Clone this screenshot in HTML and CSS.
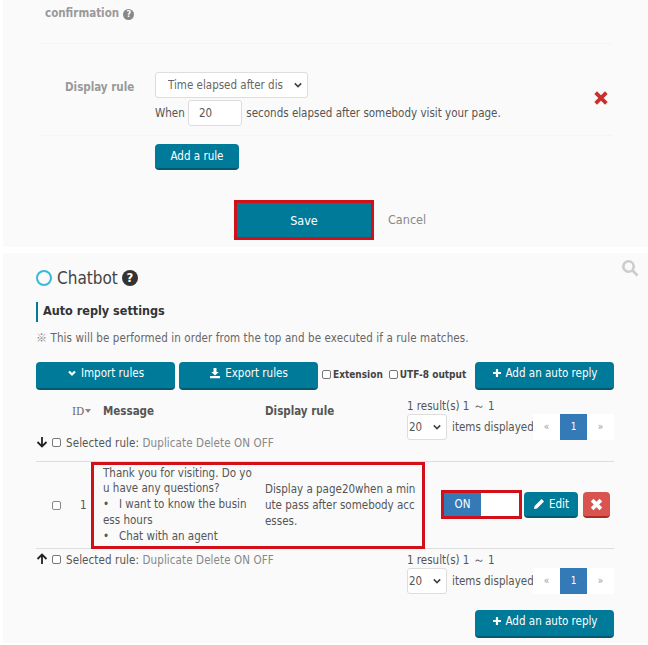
FILE: index.html
```html
<!DOCTYPE html>
<html lang="en">
<head>
    <meta charset="UTF-8">
    <title>Chatbot</title>
    <link rel="stylesheet" href="styles.css">
</head>
<body>
    <section class="panel top">
        <div class="confirm"><b>confirmation</b> <span class="help small">?</span></div>
        <div class="rule">
            <div class="rule-label">Display rule</div>
            <div class="rule-body">
                <div class="fake-select wide"><span class="clip">Time elapsed after dis</span><svg class="chev" viewBox="0 0 10 6"><path d="M1 1l4 4 4-4" /></svg></div>
                <div class="when">When <span class="fake-input">20</span> seconds elapsed after somebody visit your page.</div>
            </div>
            <svg class="rule-del" viewBox="0 0 12 12"><path d="M2 2l8 8M10 2l-8 8" /></svg>
        </div>
        <div class="add-rule"><button class="btn">Add a rule</button></div>
        <div class="save-row">
            <button class="btn save">Save</button>
            <span class="cancel">Cancel</span>
        </div>
    </section>

    <section class="panel bottom">
        <svg class="search" viewBox="0 0 18 18"><circle cx="7.5" cy="7.5" r="5.2" /><path d="M11.5 11.5l5 5" /></svg>
        <h1><span class="ring"></span>Chatbot <span class="help">?</span></h1>
        <h2>Auto reply settings</h2>
        <p class="note"><span class="mark">※</span> This will be performed in order from the top and be executed if a rule matches.</p>

        <div class="toolbar">
            <button class="btn big"><svg class="ico" viewBox="0 0 10 10"><path d="M2 3.5l3 3 3-3" class="thick" /></svg>Import rules</button>
            <button class="btn big"><svg class="ico wide-ico" viewBox="0 0 12 12"><path d="M4.5 1h3v4h2.2L6 8.6 2.3 5h2.2zM1 9h10v2.2H1z" class="solid" /></svg>Export rules</button>
            <label class="opt"><span class="check"></span>Extension</label>
            <label class="opt"><span class="check"></span>UTF-8 output</label>
            <button class="btn big add"><svg class="ico" viewBox="0 0 10 10"><path d="M5 1v8M1 5h8" class="thick" /></svg>Add an auto reply</button>
        </div>

        <div class="head">
            <div class="head-cols">
                <span class="id-col">ID<i class="sort"></i></span>
                <b class="msg-col">Message</b>
                <b class="disp-col">Display rule</b>
            </div>
            <div class="paging">
                <div>1 result(s) 1 ～ 1</div>
                <div class="paging-row">
                    <div class="fake-select small-sel">20<svg class="chev" viewBox="0 0 10 6"><path d="M1 1l4 4 4-4" /></svg></div>
                    <span class="items">items displayed</span>
                    <div class="pager"><span>«</span><span class="cur">1</span><span>»</span></div>
                </div>
            </div>
        </div>
        <div class="bulk head-bulk">
            <svg class="arrow" viewBox="0 0 12 12"><path d="M6 1v9M1.5 6L6 10.5 10.5 6" /></svg><span class="check"></span>Selected rule: <span class="muted">Duplicate Delete ON OFF</span>
        </div>

        <div class="row">
            <div class="row-check"><span class="check big-check"></span></div>
            <div class="row-id">1</div>
            <div class="marked">
                <div class="msg">
                    Thank you for visiting. Do yo<br>u have any questions?<br>
                    •&nbsp;&nbsp; I want to know the busin<br>ess hours<br>
                    •&nbsp;&nbsp; Chat with an agent
                </div>
                <div class="disp">Display a page20when a min<br>ute pass after somebody acc<br>esses.</div>
            </div>
            <div class="toggle"><span class="on">ON</span><span class="off"></span></div>
            <button class="btn edit"><svg class="ico wide-ico" viewBox="0 0 12 12"><path d="M8.6 1l2.4 2.4-7 7L1 11l.6-3z" class="solid" /></svg>Edit</button>
            <button class="btn del"><svg viewBox="0 0 12 12"><path d="M2.5 2.5l7 7M9.5 2.5l-7 7" /></svg></button>
        </div>

        <div class="foot">
            <div class="bulk">
                <svg class="arrow" viewBox="0 0 12 12"><path d="M6 11V2M1.5 6L6 1.5 10.5 6" /></svg><span class="check"></span>Selected rule: <span class="muted">Duplicate Delete ON OFF</span>
            </div>
            <div class="paging">
                <div>1 result(s) 1 ～ 1</div>
                <div class="paging-row">
                    <div class="fake-select small-sel">20<svg class="chev" viewBox="0 0 10 6"><path d="M1 1l4 4 4-4" /></svg></div>
                    <span class="items">items displayed</span>
                    <div class="pager"><span>«</span><span class="cur">1</span><span>»</span></div>
                </div>
            </div>
        </div>
        <div class="foot-add">
            <button class="btn big add"><svg class="ico" viewBox="0 0 10 10"><path d="M5 1v8M1 5h8" class="thick" /></svg>Add an auto reply</button>
        </div>
    </section>
</body>
</html>
```

FILE: styles.css
```css
*{
    margin: 0;
    padding: 0;
    box-sizing: border-box;
}
body{
    background-color: white;
    font-family: "DejaVu Sans Condensed", "DejaVu Sans", sans-serif;
    font-stretch: condensed;
    font-size: 11.5px;
    line-height: 16px;
    color: #555;
    width: 648px;
    height: 645px;
    overflow: hidden;
}
button{
    font-family: inherit;
    font-stretch: inherit;
}
.panel{
    background-color: #fafafa;
    margin-left: 3px;
}
.top{
    height: 247px;
    padding-top: 5px;
}
.bottom{
    position: relative;
    height: 390px;
    margin-top: 6px;
    padding-top: 16px;
}

/* buttons */
.btn{
    background-color: #007a99;
    border: none;
    border-bottom: 2px solid #035a70;
    border-radius: 4px;
    color: white;
    font-size: 11.5px;
    cursor: pointer;
}
.big{
    width: 139px;
    height: 28px;
    padding-bottom: 5px;
}
.ico{
    width: 10px;
    height: 10px;
    margin-right: 4px;
    vertical-align: -1px;
}
.wide-ico{
    width: 12px;
    height: 12px;
    vertical-align: -2px;
}
.thick{
    fill: none;
    stroke: white;
    stroke-width: 2.2;
}
.solid{
    fill: white;
}
.help{
    display: inline-flex;
    justify-content: center;
    align-items: center;
    width: 16px;
    height: 16px;
    border-radius: 50%;
    background-color: #333;
    color: white;
    font-size: 13px;
    font-weight: bold;
}
.help.small{
    width: 11px;
    height: 11px;
    font-size: 9px;
    background-color: #888;
    margin-left: 1px;
}

/* top form */
.confirm{
    color: #999;
    height: 39px;
    border-bottom: 1px solid #f5f5f5;
    margin-right: 35px;
    margin-left: 37px;
    padding-left: 5px;
}
.rule{
    display: flex;
    margin: 0 35px 0 37px;
    height: 92px;
    padding-top: 28px;
    border-bottom: 1px solid #f5f5f5;
}
.rule-label{
    width: 115px;
    padding: 7px 0 0 25px;
    color: #999;
    font-weight: bold;
    white-space: nowrap;
}
.rule-body{
    width: 439px;
}
.fake-select{
    display: flex;
    align-items: center;
    background-color: white;
    border: 1px solid #ddd;
    border-radius: 3px;
    white-space: nowrap;
    overflow: hidden;
}
.wide{
    width: 153px;
    height: 26px;
    padding-left: 12px;
    color: #666;
}
.clip{
    width: 115px;
    overflow: hidden;
}
.chev{
    width: 8px;
    height: 6px;
    margin-left: auto;
    margin-right: 5px;
    flex-shrink: 0;
    fill: none;
    stroke: #444;
    stroke-width: 2;
}
.when{
    margin-top: 2px;
    white-space: nowrap;
}
.fake-input{
    display: inline-block;
    width: 54px;
    height: 26px;
    line-height: 24px;
    padding-left: 10px;
    margin-right: 1px;
    background-color: white;
    border: 1px solid #ddd;
    border-radius: 3px;
}
.rule-del{
    width: 16px;
    height: 16px;
    margin-top: 18px;
    margin-left: -1px;
    fill: none;
    stroke: #c9302c;
    stroke-width: 2.8;
}
.add-rule{
    margin: 8px 0 0 152px;
}
.add-rule .btn{
    width: 84px;
    height: 26px;
}
.save-row{
    display: flex;
    align-items: center;
    margin: 30px 0 0 231px;
}
.save{
    width: 140px;
    height: 40px;
    font-size: 12.5px;
    border: 3px solid #d2101a;
    border-radius: 0;
}
.cancel{
    margin-left: 14px;
    font-size: 12.5px;
    color: #888;
}

/* bottom panel */
.search{
    position: absolute;
    top: 6px;
    right: 9px;
    width: 18px;
    height: 18px;
    fill: none;
    stroke: #ccc;
    stroke-width: 2.6;
}
h1{
    display: flex;
    align-items: center;
    margin-left: 33px;
    font-size: 17px;
    line-height: 18px;
    font-weight: normal;
    color: #444;
}
.ring{
    width: 16px;
    height: 16px;
    margin-right: 5px;
    border: 2px solid #3bb8d8;
    border-radius: 50%;
}
h1 .help{
    margin-left: 4px;
}
h2{
    margin: 15px 0 0 33px;
    padding-left: 5px;
    border-left: 2px solid #007a99;
    height: 20px;
    font-size: 12.5px;
    line-height: 18px;
    color: #333;
}
.note{
    margin: 7px 0 0 33px;
    color: #666;
    letter-spacing: 0.1px;
}
.mark{
    font-family: "Noto Sans CJK JP", sans-serif;
    font-size: 11px;
    color: #888;
}
.toolbar{
    display: flex;
    align-items: center;
    margin: 16px 34px 0 33px;
    gap: 4px;
}
.opt{
    display: inline-flex;
    align-items: center;
    font-size: 10px;
    font-weight: bold;
    white-space: nowrap;
    color: #444;
    margin-bottom: 3px;
    gap: 1px;
}
.opt + .opt{
    margin-left: 2px;
}
.check{
    display: inline-block;
    width: 9px;
    height: 9px;
    background-color: white;
    border: 1px solid #777;
    border-radius: 2px;
    margin-right: 1px;
}
.toolbar .add{
    margin-left: auto;
}
.head, .foot{
    display: flex;
    justify-content: space-between;
    margin: 0 34px 0 33px;
}
.head{
    height: 42px;
    margin-top: 8px;
}
.head-cols{
    display: flex;
    padding-top: 5px;
    font-weight: normal;
}
.id-col{
    width: 67px;
    padding-left: 36px;
    font-family: "DejaVu Serif", serif;
    color: #666;
}
.sort{
    display: inline-block;
    margin-left: 1px;
    border: 3px solid transparent;
    border-top: 4px solid #888;
    border-bottom: none;
    vertical-align: 2px;
}
.msg-col{
    width: 162px;
}
.paging{
    width: 207px;
    flex-shrink: 0;
    white-space: nowrap;
}
.paging-row{
    display: flex;
    align-items: center;
}
.small-sel{
    width: 41px;
    height: 26px;
    padding-left: 1px;
}
.items{
    margin-left: 5px;
    width: 81px;
}
.pager{
    display: flex;
}
.pager span{
    width: 27px;
    height: 26px;
    line-height: 26px;
    text-align: center;
    background-color: white;
    color: #999;
    font-size: 10px;
}
.pager .cur{
    background-color: #337ab7;
    color: white;
}
.bulk{
    white-space: nowrap;
    color: #555;
    letter-spacing: 0.1px;
}
.bulk .check{
    margin-right: 5px;
}
.head-bulk{
    margin: -5px 0 0 33px;
    height: 26px;
}
.muted{
    color: #888;
}
.arrow{
    width: 12px;
    height: 12px;
    margin-right: 4px;
    vertical-align: -1px;
    fill: none;
    stroke: #222;
    stroke-width: 1.8;
}
.row{
    display: flex;
    align-items: center;
    margin: 0 34px 0 33px;
    height: 88px;
    border-top: 1px solid #ddd;
    border-bottom: 1px solid #ddd;
}
.row-check{
    width: 24px;
    padding-left: 16px;
    flex-shrink: 0;
}
.big-check{
    width: 9px;
    height: 9px;
    display: block;
    border-color: #888;
}
.row-id{
    width: 30px;
    padding-left: 20px;
    flex-shrink: 0;
    white-space: nowrap;
}
.marked{
    display: flex;
    align-items: center;
    width: 334px;
    height: 87px;
    margin-left: 1px;
    border: 3px solid #d2101a;
    padding-left: 9px;
    flex-shrink: 0;
}
.msg{
    width: 162px;
    flex-shrink: 0;
    white-space: nowrap;
    line-height: 15.7px;
}
.disp{
    white-space: nowrap;
}
.toggle{
    display: flex;
    width: 81px;
    height: 29px;
    margin: 0 0 2px 16px;
    border: 3px solid #d2101a;
    background-color: white;
}
.on{
    width: 37px;
    line-height: 23px;
    text-align: center;
    background-color: #337ab7;
    color: white;
}
.edit{
    width: 54px;
    height: 26px;
    margin-left: 2px;
}
.del{
    width: 27px;
    height: 26px;
    margin-left: 5px;
    background-color: #d9534f;
    border-bottom-color: #ac2925;
}
.del svg{
    width: 15px;
    height: 15px;
    fill: none;
    stroke: white;
    stroke-width: 3;
    vertical-align: -3px;
}
.foot{
    margin-top: 3px;
}
.foot-add{
    margin: 16px 34px 0 0;
    display: flex;
    justify-content: flex-end;
}
```
